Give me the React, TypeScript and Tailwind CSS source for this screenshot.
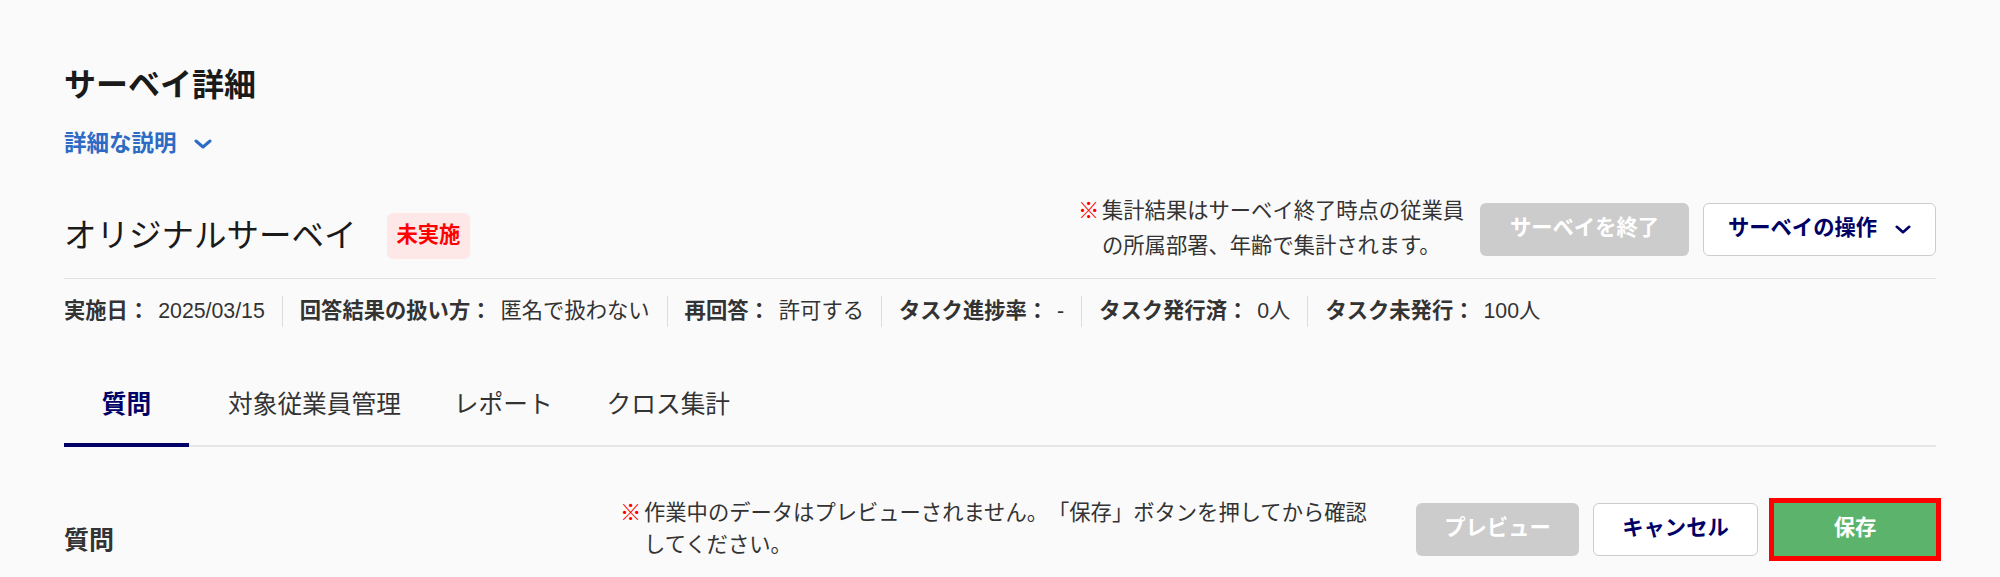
import React from "react";

function ChevronDown({ className }: { className?: string }) {
  return (
    <svg viewBox="0 0 18 10" className={className} fill="none" stroke="currentColor" strokeWidth="3" strokeLinecap="round" strokeLinejoin="round">
      <polyline points="2,2 9,8 16,2" />
    </svg>
  );
}

function MetaItem({ label, value }: { label: string; value: string }) {
  return (
    <div className="flex items-center whitespace-nowrap">
      <span className="font-bold">{label}</span>
      <span className="ml-[9px]">{value}</span>
    </div>
  );
}

function Divider() {
  return <div className="mx-[17px] h-[31px] w-px bg-[#dddddd]" />;
}

export default function App() {
  return (
    <div className="min-h-[577px] w-full bg-[#fafafa] text-[#333333] font-['Liberation_Sans','Noto_Sans_CJK_JP',sans-serif] [text-spacing-trim:space-all]">
      <div className="px-[64px] pt-[61px]">
        <h1 className="text-[32px] leading-[48px] font-bold text-[#1a1a1a]">サーベイ詳細</h1>
        <div className="mt-[19px] flex items-center gap-[17px] text-[22.5px] leading-[32px] font-bold text-[#2d6bc4]">
          <span>詳細な説明</span>
          <ChevronDown className="h-[10px] w-[18px]" />
        </div>

        <div className="mt-[34px] flex h-[70px] items-center justify-between">
          <div className="flex items-center gap-[30px] pt-[13px]">
            <span className="text-[32.5px] leading-[46px] text-[#1a1a1a]">オリジナルサーベイ</span>
            <span className="flex h-[46px] items-center rounded-[6px] bg-[#fde7e7] px-[10px] text-[21.3px] font-bold text-[#ff0000]">未実施</span>
          </div>
          <div className="flex items-center">
            <div className="flex text-[21.3px] leading-[35px]">
              <span className="w-[24px] text-[#ff0000]">※</span>
              <div className="w-[365px]">集計結果はサーベイ終了時点の従業員の所属部署、年齢で集計されます。</div>
            </div>
            <button className="ml-[13px] flex h-[53px] w-[209px] items-center justify-center rounded-[6px] bg-[#cccccc] text-[21.3px] font-bold text-white">サーベイを終了</button>
            <button className="ml-[14px] flex h-[53px] w-[233px] items-center justify-center gap-[18px] rounded-[6px] border border-[#cccccc] bg-white text-[21.3px] font-bold text-[#000066]">
              <span>サーベイの操作</span>
              <ChevronDown className="h-[9px] w-[16px]" />
            </button>
          </div>
        </div>

        <div className="mt-[14px] h-px bg-[#e0e0e0]" />

        <div className="mt-[17px] flex items-center text-[21.3px] leading-[31px]">
          <MetaItem label="実施日：" value="2025/03/15" />
          <Divider />
          <MetaItem label="回答結果の扱い方：" value="匿名で扱わない" />
          <Divider />
          <MetaItem label="再回答：" value="許可する" />
          <Divider />
          <MetaItem label="タスク進捗率：" value="-" />
          <Divider />
          <MetaItem label="タスク発行済：" value="0人" />
          <Divider />
          <MetaItem label="タスク未発行：" value="100人" />
        </div>

        <div className="mt-[60px] flex border-b-2 border-[#e6e6e6] text-[24.7px] leading-[36px]">
          <div className="-mb-[2px] w-[125px] border-b-4 border-[#000066] pb-[20px] text-center font-bold text-[#000066]">質問</div>
          <div className="-mb-[2px] ml-[13px] border-b-4 border-transparent px-[26px] pb-[20px]">対象従業員管理</div>
          <div className="-mb-[2px] border-b-4 border-transparent px-[27px] pb-[20px]">レポート</div>
          <div className="-mb-[2px] border-b-4 border-transparent px-[27px] pb-[20px]">クロス集計</div>
        </div>

        <div className="mt-[50px] flex items-center justify-between">
          <h2 className="pt-[21px] text-[25px] leading-[36px] font-bold text-[#333333]">質問</h2>
          <div className="flex items-center">
            <div className="flex text-[21.3px] leading-[32px]">
              <span className="w-[24px] text-[#ff0000]">※</span>
              <div className="w-[735px]">作業中のデータはプレビューされません。「保存」ボタンを押してから確認してください。</div>
            </div>
            <button className="ml-[37px] flex h-[53px] w-[163px] items-center justify-center rounded-[6px] bg-[#cccccc] text-[21.3px] font-bold text-white">プレビュー</button>
            <button className="ml-[14px] flex h-[53px] w-[165px] items-center justify-center rounded-[6px] border border-[#cccccc] bg-white text-[21.3px] font-bold text-[#000066]">キャンセル</button>
            <button className="ml-[16px] flex h-[53px] w-[162px] items-center justify-center bg-[#5cb46c] text-[21.3px] font-bold text-white outline-[5px] outline-solid outline-[#ff0000]">保存</button>
          </div>
        </div>
      </div>
    </div>
  );
}
